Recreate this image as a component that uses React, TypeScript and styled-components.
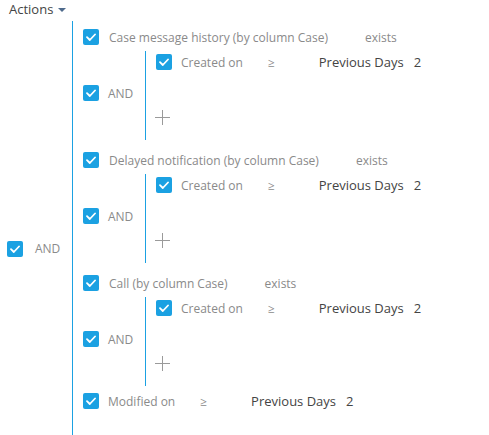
import React from "react";
import styled, { createGlobalStyle } from "styled-components";

const Global = createGlobalStyle`
  html, body { margin: 0; padding: 0; background: #fff; }
  body { font-family: "Open Sans", "Noto Sans", sans-serif; font-size: 13px; color: #444; }
`;

const BLUE = "#1ba1e2";

const Page = styled.div`
  display: flex;
  flex-direction: column;
  height: 435px;
  overflow: hidden;
`;

const ActionsBar = styled.div`
  display: flex;
  align-items: center;
  gap: 5px;
  height: 18px;
  padding-left: 9px;
  color: #444;
  font-size: 13px;
`;

const Caret = styled.span`
  width: 0;
  height: 0;
  border-left: 4.5px solid transparent;
  border-right: 4.5px solid transparent;
  border-top: 4.5px solid #4e6a8c;
  margin-top: 1px;
`;

const Tree = styled.div`
  display: flex;
  margin-top: 3px;
  flex: 1;
`;

const OuterAnd = styled.div`
  display: flex;
  align-items: center;
  align-self: flex-start;
  margin-top: 219px;
  padding-left: 7px;
  width: 65px;
`;

const Block = styled.div<{ $pad: number }>`
  display: flex;
  flex-direction: column;
  border-left: 1px solid ${BLUE};
  padding-left: ${(p) => p.$pad}px;
`;

const MainBlock = styled(Block)`
  padding-top: 6px;
  flex: 1;
`;

const Row = styled.div`
  display: flex;
  align-items: center;
  height: 20px;
  white-space: nowrap;
`;

const Box = styled.span`
  flex: none;
  width: 16px;
  height: 16px;
  border-radius: 2px;
  background: ${BLUE};
  display: inline-flex;
  align-items: center;
  justify-content: center;
`;

const Label = styled.span<{ $gap: number }>`
  color: #8a8a8a;
  font-size: 12px;
  margin-left: ${(p) => p.$gap}px;
`;

const Exists = styled.span`
  color: #8a8a8a;
  font-size: 12px;
  margin-left: 37px;
`;

const Op = styled.span`
  color: #8a8a8a;
  font-size: 12px;
  margin-left: 25px;
`;

const Value = styled.span`
  color: #444;
  margin-left: 44px;
`;

const Num = styled.span`
  color: #444;
  margin-left: 10px;
`;

const Group = styled.div<{ $after: number }>`
  display: flex;
  flex-direction: column;
  padding-bottom: ${(p) => p.$after}px;
`;

const SubGroup = styled.div`
  display: flex;
  margin-top: 4px;
`;

const AndCell = styled.div`
  display: flex;
  align-items: center;
  align-self: flex-start;
  height: 20px;
  margin-top: 32px;
  width: 62px;
`;

const InnerBlock = styled(Block)`
  padding-top: 1px;
  padding-bottom: 15px;
`;

const PlusBtn = styled.span`
  display: block;
  margin-top: 38px;
  margin-left: -1px;
  width: 15px;
  height: 15px;
  position: relative;
  &::before, &::after {
    content: "";
    position: absolute;
    background: #9a9a9a;
  }
  &::before { left: 7px; top: 0; width: 1px; height: 15px; }
  &::after { top: 7px; left: 0; width: 15px; height: 1px; }
`;

const Check = () => (
  <Box>
    <svg width="10" height="8" viewBox="0 0 10 8">
      <path d="M1 4.2 L3.8 7 L9 1.5" fill="none" stroke="#fff" strokeWidth="1.8" strokeLinecap="round" strokeLinejoin="round" />
    </svg>
  </Box>
);

const Condition = ({ label, gap }: { label: string; gap: number }) => (
  <Row>
    <Check />
    <Label $gap={gap}>{label}</Label>
    <Op>≥</Op>
    <Value>Previous Days</Value>
    <Num>2</Num>
  </Row>
);

const groups = [
  { title: "Case message history (by column Case)", after: 10 },
  { title: "Delayed notification (by column Case)", after: 10 },
  { title: "Call (by column Case)", after: 5 },
];

export default function App() {
  return (
    <Page>
      <Global />
      <ActionsBar>
        Actions <Caret />
      </ActionsBar>
      <Tree>
        <OuterAnd>
          <Check />
          <Label $gap={12}>AND</Label>
        </OuterAnd>
        <MainBlock $pad={10}>
          {groups.map((g) => (
            <Group key={g.title} $after={g.after}>
              <Row>
                <Check />
                <Label $gap={10}>{g.title}</Label>
                <Exists>exists</Exists>
              </Row>
              <SubGroup>
                <AndCell>
                  <Check />
                  <Label $gap={9}>AND</Label>
                </AndCell>
                <InnerBlock $pad={10}>
                  <Condition label="Created on" gap={9} />
                  <PlusBtn />
                </InnerBlock>
              </SubGroup>
            </Group>
          ))}
          <Condition label="Modified on" gap={9} />
        </MainBlock>
      </Tree>
    </Page>
  );
}
